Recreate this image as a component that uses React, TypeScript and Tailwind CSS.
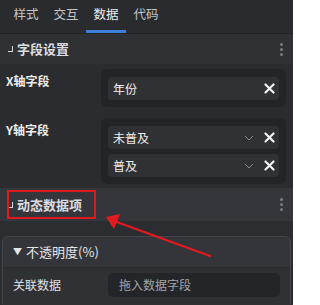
import React from "react";

const font = {
  fontFamily: '"Noto Sans CJK SC", "Noto Sans", "Liberation Sans", sans-serif',
};

function Corner() {
  return (
    <span className="mr-[4px] inline-block h-[6px] w-[5px] border-b-[1.5px] border-r-[1.5px] border-[#d5d6d9]" />
  );
}

function Kebab() {
  return (
    <span className="flex flex-col gap-[2px]">
      <span className="h-[3px] w-[3px] rounded-full bg-[#7b7c80]" />
      <span className="h-[3px] w-[3px] rounded-full bg-[#7b7c80]" />
      <span className="h-[3px] w-[3px] rounded-full bg-[#7b7c80]" />
    </span>
  );
}

function CloseIcon() {
  return (
    <svg width="11" height="11" viewBox="0 0 11 11">
      <path d="M1.5 1.5 L9.5 9.5 M9.5 1.5 L1.5 9.5" stroke="#f2f2f2" strokeWidth="2.2" strokeLinecap="round" />
    </svg>
  );
}

function Chevron() {
  return (
    <svg width="10" height="6" viewBox="0 0 10 6">
      <path d="M1 1 L5 5 L9 1" stroke="#8a8b8f" strokeWidth="1" fill="none" />
    </svg>
  );
}

function Pill({ label, select }: { label: string; select?: boolean }) {
  return (
    <div className="flex h-[23px] items-center rounded-[4px] bg-[#303135] pl-[5px] pr-[4px] text-[12px] text-[#f0f0f0]">
      <span className="flex-1">{label}</span>
      {select ? (
        <span className="mr-[10px] flex items-center">
          <Chevron />
        </span>
      ) : null}
      <CloseIcon />
    </div>
  );
}

function SectionHeader({ title, height }: { title: string; height: string }) {
  return (
    <div className={`flex items-center justify-between pl-[8px] pr-[10px] ${height}`}>
      <span className="flex items-center text-[13px] font-bold text-[#dcdde0]">
        <Corner />
        {title}
      </span>
      <Kebab />
    </div>
  );
}

export default function App() {
  const tabs = ["样式", "交互", "数据", "代码"];
  return (
    <div className="relative h-[305px] w-[293px] overflow-hidden bg-[#2b2c30]" style={font}>
      <div className="flex h-[34px] border-b border-[#212225] bg-[#2a2b2f] pl-[6px]">
        {tabs.map((tab) => (
          <div
            key={tab}
            className={`flex w-[40px] items-center justify-center border-b-[3px] pb-[1px] text-[12.5px] ${
              tab === "数据"
                ? "border-[#3f7fdc] text-[#eeeeee]"
                : "border-transparent text-[#c4c5c8]"
            }`}
          >
            {tab}
          </div>
        ))}
      </div>

      <div className="bg-[#303135]">
        <SectionHeader title="字段设置" height="h-[30px]" />
      </div>

      <div className="flex flex-col gap-[11px] bg-[#2b2c30] pb-[4px] pl-[6px] pr-[7px] pt-[5px]">
        <div className="flex">
          <span className="w-[95px] pt-[3px] text-[12px] font-semibold text-[#eeeeee]">X轴字段</span>
          <div className="flex-1 rounded-[6px] bg-[#232427] px-[7px] pb-[7px] pt-[8px]">
            <Pill label="年份" />
          </div>
        </div>
        <div className="flex">
          <span className="w-[95px] pt-[3px] text-[12px] font-semibold text-[#eeeeee]">Y轴字段</span>
          <div className="flex flex-1 flex-col gap-[5px] rounded-[6px] bg-[#232427] px-[7px] pb-[7px] pt-[8px]">
            <Pill label="未普及" select />
            <Pill label="普及" select />
          </div>
        </div>
      </div>

      <div className="relative bg-[#35363b]">
        <SectionHeader title="动态数据项" height="h-[33px]" />
        <div className="absolute left-[7px] top-[2px] h-[29px] w-[89px] border-2 border-[#e0191d]" />
      </div>

      <div className="bg-[#2c2d31] px-[2px] pt-[15px]">
        <div className="rounded-[6px] border border-[#46474c] bg-[#34353a]">
          <div className="flex h-[31px] items-center border-b border-[#2a2b2f] pl-[10px] text-[13px] text-[#e6e6e8]">
            <span className="mr-[4px] text-[9px]">▼</span>
            不透明度(%)
          </div>
          <div className="flex items-center bg-[#303135] pb-[10px] pl-[10px] pr-[10px] pt-[5px]">
            <span className="w-[95px] text-[12px] text-[#e0e0e2]">关联数据</span>
            <div className="flex h-[24px] flex-1 items-center rounded-[5px] bg-[#242528] pl-[11px] text-[12px] text-[#a3a4a8]">
              拖入数据字段
            </div>
          </div>
        </div>
      </div>

      <svg className="pointer-events-none absolute left-0 top-0" width="293" height="305" viewBox="0 0 293 305">
        <line x1="210" y1="256" x2="114" y2="221" stroke="#e31b1f" strokeWidth="2.2" strokeLinecap="round" />
        <polygon points="106,217 120,214 114,229" fill="#e31b1f" />
      </svg>
    </div>
  );
}
